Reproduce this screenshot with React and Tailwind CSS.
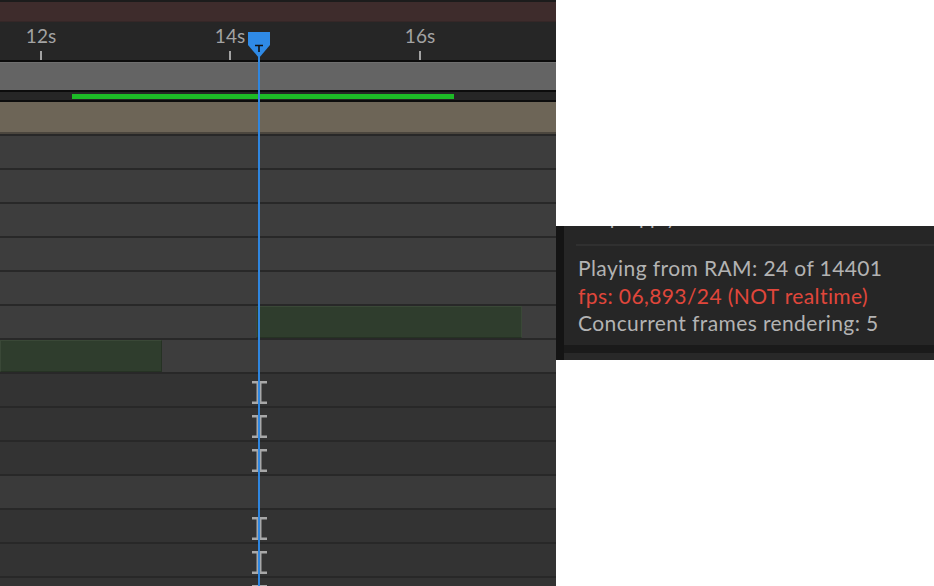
import React from "react";

const rows = [
  { bg: "bg-[#3d3d3d]" },
  { bg: "bg-[#3d3d3d]" },
  { bg: "bg-[#3d3d3d]" },
  { bg: "bg-[#3d3d3d]" },
  { bg: "bg-[#3d3d3d]" },
  { bg: "bg-[#3d3d3d]", clip: "right" },
  { bg: "bg-[#3d3d3d]", clip: "left" },
  { bg: "bg-[#333333]", beam: true },
  { bg: "bg-[#333333]", beam: true },
  { bg: "bg-[#333333]", beam: true },
  { bg: "bg-[#3a3a3a]" },
  { bg: "bg-[#333333]", beam: true },
  { bg: "bg-[#333333]", beam: true },
  { bg: "bg-[#333333]", beam: true },
];

function IBeam() {
  return (
    <svg className="absolute left-[252px] top-[7px]" width="15" height="23" viewBox="0 0 15 23">
      <path d="M0 1.2 H15 M0 21.8 H15" stroke="#a8a8a8" strokeWidth="2.4" fill="none" />
      <rect x="4.5" y="1" width="5" height="21" fill="#a8a8a8" />
    </svg>
  );
}

function Row({ r }) {
  return (
    <div className={`relative shrink-0 h-[34px] border-t-2 border-[#282828] ${r.bg}`}>
      {r.clip === "right" && (
        <div className="absolute left-[256px] top-0 h-[32px] w-[266px] bg-[#2f3d2d] border border-[#3a4837] border-b-[#263224]" />
      )}
      {r.clip === "left" && (
        <div className="absolute left-0 top-0 h-[32px] w-[162px] bg-[#2f3d2d] border border-[#3a4837] border-r-[#263224] border-b-[#263224]" />
      )}
      {r.beam && <IBeam />}
    </div>
  );
}

function Tick({ label, x }) {
  return (
    <div className="absolute top-0 h-[38px] flex flex-col items-center" style={{ left: x - 30, width: 60 }}>
      <div className="mt-[2px] text-[19px] leading-[24px] text-[#a3a3a3]">{label}</div>
      <div className="mt-auto w-[2px] h-[9px] bg-[#a3a3a3]" />
    </div>
  );
}

export default function App() {
  return (
    <div className="w-[934px] h-[586px] flex overflow-hidden bg-white" style={{ fontFamily: "Lato, 'Noto Sans', sans-serif" }}>
      <div className="relative w-[556px] h-[586px] shrink-0 flex flex-col bg-[#333333] overflow-hidden">
        <div className="shrink-0 h-[2px] bg-[#1c1c1c]" />
        <div className="shrink-0 h-[20px] bg-[#3e2c2c] border-b border-[#352727]" />
        <div className="shrink-0 relative h-[38px] bg-[#262626]">
          <Tick label="12s" x={41} />
          <Tick label="14s" x={230} />
          <Tick label="16s" x={420} />
        </div>
        <div className="shrink-0 h-[2px] bg-[#0c0c0c]" />
        <div className="shrink-0 h-[28px] bg-[#646464] border-t border-[#6f6f6f]" />
        <div className="shrink-0 h-[2px] bg-[#0c0c0c]" />
        <div className="shrink-0 relative h-[8px] bg-[#262626]">
          <div className="absolute left-[72px] top-[2px] h-[5px] w-[382px] bg-[#1dbb27]" />
        </div>
        <div className="shrink-0 h-[2px] bg-[#0c0c0c]" />
        <div className="shrink-0 h-[30px] bg-[#6d6557]" />
        <div className="shrink-0 h-[2px] bg-[#4b463e]" />
        {rows.map((r, i) => (
          <Row key={i} r={r} />
        ))}
        {/* playhead */}
        <div className="absolute left-[258px] top-[44px] bottom-0 w-[2px] bg-[#2f86df]" />
        <svg className="absolute left-[248px] top-[32px]" width="22" height="27" viewBox="0 0 22 27">
          <path d="M0 0 H22 V13 L11 26 L0 13 Z" fill="#2f8ae6" />
          <path d="M7 13.5 H15 M11 13.5 V20" stroke="#111" strokeWidth="1.6" fill="none" />
        </svg>
      </div>
      <div className="w-[378px] h-[586px] shrink-0 bg-white flex flex-col">
        <div className="shrink-0 h-[226px]" />
        <div className="shrink-0 h-[134px] flex">
          <div className="w-[8px] bg-[#141414]" />
          <div className="flex-1 flex flex-col bg-[#262626]">
            <div className="shrink-0 h-[119px] flex flex-col">
              <div className="shrink-0 h-[6px] overflow-hidden ml-[14px] relative">
                <div className="absolute left-0 top-[-22px] text-[20px] leading-[27px] text-[#b3b3b3] whitespace-nowrap">
                  Snap Apply Frame
                </div>
              </div>
              <div className="shrink-0 mt-[12px] ml-[12px] h-[2px] bg-[#303030]" />
              <div className="ml-[14px] mt-[8px] text-[21px] tracking-[0.4px] leading-[27.5px] whitespace-nowrap">
                <div className="text-[#b3b3b3]">Playing from RAM: 24 of 14401</div>
                <div className="text-[#e0463b]">fps: 06,893/24 (NOT realtime)</div>
                <div className="text-[#b3b3b3]">Concurrent frames rendering: 5</div>
              </div>
            </div>
            <div className="shrink-0 h-[8px] bg-[#1a1a1a]" />
            <div className="flex-1 bg-[#282828]" />
          </div>
        </div>
        <div className="flex-1" />
      </div>
    </div>
  );
}
